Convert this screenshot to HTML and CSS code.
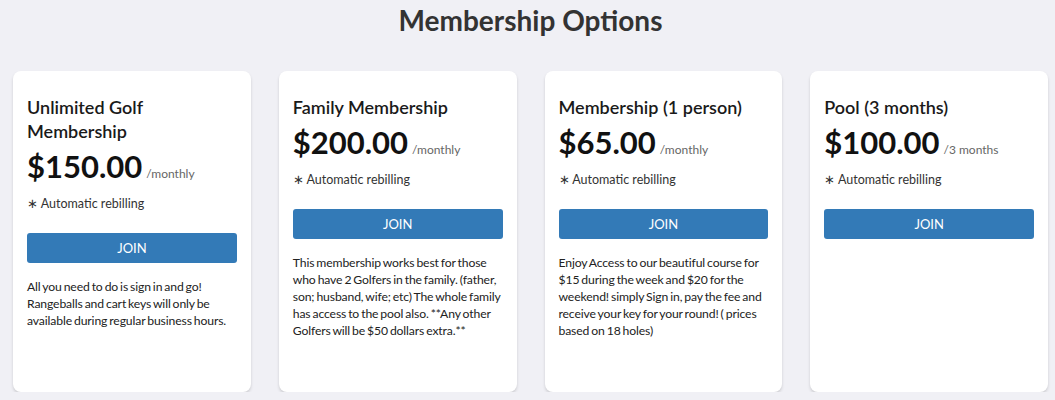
FILE: index.html
```html
<!DOCTYPE html>
<html lang="en">
<head>
    <meta charset="UTF-8">
    <meta name="viewport" content="width=device-width, initial-scale=1.0">
    <title>Membership Options</title>
    <link rel="stylesheet" href="styles.css">
</head>
<body>
    <h1 class="page-title">Membership Options</h1>

    <div class="plans">
        <div class="plan">
            <h3 class="plan-name">Unlimited Golf Membership</h3>
            <div class="plan-price">$150.00<span class="plan-period">/monthly</span></div>
            <div class="plan-note">&lowast; Automatic rebilling</div>
            <button class="join-btn">JOIN</button>
            <p class="plan-desc">All you need to do is sign in and go! Rangeballs and cart keys will only be available during regular business hours.</p>
        </div>

        <div class="plan">
            <h3 class="plan-name">Family Membership</h3>
            <div class="plan-price">$200.00<span class="plan-period">/monthly</span></div>
            <div class="plan-note">&lowast; Automatic rebilling</div>
            <button class="join-btn">JOIN</button>
            <p class="plan-desc">This membership works best for those who have 2 Golfers in the family. (father, son; husband, wife; etc) The whole family has access to the pool also. **Any other Golfers will be $50 dollars extra.**</p>
        </div>

        <div class="plan">
            <h3 class="plan-name">Membership (1 person)</h3>
            <div class="plan-price">$65.00<span class="plan-period">/monthly</span></div>
            <div class="plan-note">&lowast; Automatic rebilling</div>
            <button class="join-btn">JOIN</button>
            <p class="plan-desc">Enjoy Access to our beautiful course for $15 during the week and $20 for the weekend! simply Sign in, pay the fee and receive your key for your round! ( prices based on 18 holes)</p>
        </div>

        <div class="plan">
            <h3 class="plan-name">Pool (3 months)</h3>
            <div class="plan-price">$100.00<span class="plan-period">/3 months</span></div>
            <div class="plan-note">&lowast; Automatic rebilling</div>
            <button class="join-btn">JOIN</button>
        </div>
    </div>
</body>
</html>
```

FILE: styles.css
```css
/* General Styling */
body {
    font-family: 'Lato', 'Open Sans', sans-serif;
    margin: 0;
    padding: 0 7px 0 13px;
    background: #f0f0f5;
    color: #222;
}

.page-title {
    margin: 0;
    padding-top: 4px;
    height: 67px;
    font-size: 28px;
    line-height: 32px;
    font-weight: 700;
    text-align: center;
    color: #333;
}

.plans {
    display: grid;
    grid-template-columns: repeat(4, 1fr);
    gap: 28px;
}

.plan {
    background: #fff;
    border-radius: 8px;
    padding: 24px 14px 0;
    height: 321px;
    box-sizing: border-box;
    box-shadow: 0 2px 3px rgba(0, 0, 0, 0.15);
}

.plan-name {
    margin: 0;
    font-size: 18px;
    line-height: 24px;
    font-weight: 600;
    color: #1a1a1a;
}

.plan-price {
    margin-top: 4px;
    font-size: 31px;
    line-height: 38px;
    font-weight: 700;
    color: #111;
}

.plan-period {
    margin-left: 4px;
    font-size: 12px;
    line-height: 1;
    font-weight: 400;
    color: #666;
}

.plan-note {
    margin-top: 10px;
    font-size: 12.5px;
    line-height: 18px;
    color: #333;
}

.join-btn {
    display: block;
    width: 100%;
    height: 30px;
    margin-top: 20px;
    background: #337ab7;
    color: #fff;
    border: none;
    border-radius: 3px;
    font-family: inherit;
    font-size: 13px;
    cursor: pointer;
}

.join-btn:hover {
    background: #286090;
}

.plan-desc {
    margin: 15px 2px 0 0;
    font-size: 12.2px;
    line-height: 17px;
    letter-spacing: -0.13px;
    word-spacing: -1px;
    color: #222;
}
```
